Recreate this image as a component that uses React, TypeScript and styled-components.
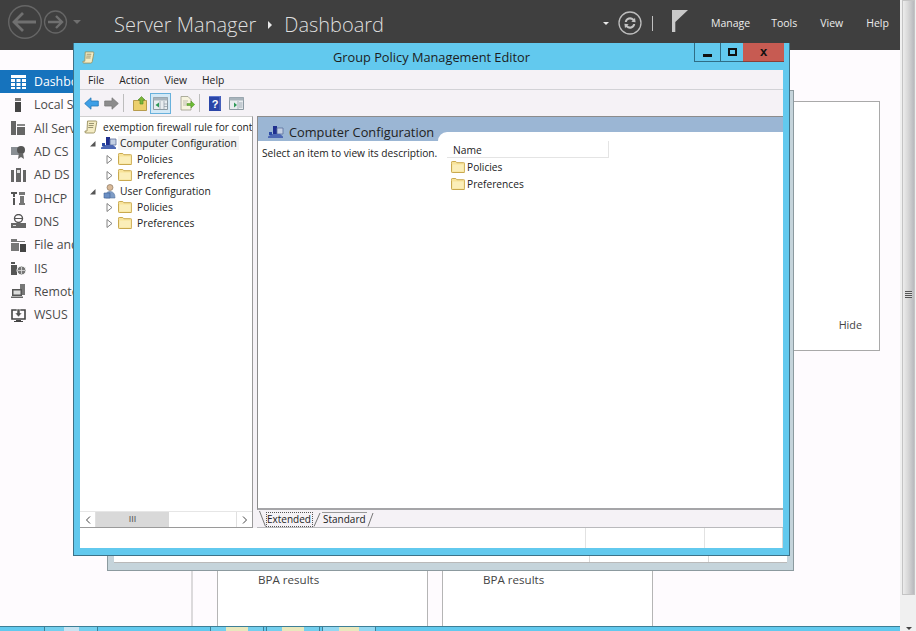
import React from "react";
import styled, { createGlobalStyle } from "styled-components";

const FONT = `"Open Sans", "Noto Sans", "Liberation Sans", sans-serif`;
const SKY = "#62c9ee";

const GlobalStyle = createGlobalStyle`
  html, body { margin: 0; padding: 0; background: #fefbfe; }
  body { font-family: ${FONT}; overflow: hidden; }
  * { box-sizing: border-box; }
`;

// Icons
const FolderIcon: React.FC = () => (
  <svg width="14" height="12" viewBox="0 0 14 12">
    <path d="M.5 2.5V1.2q0-.7.7-.7h3.600l1 1.200h6.900q1 0 1 .8v8.300q0 .7-.7.7H1.200q-.7 0-.7-.7z" fill="#f8e39a" stroke="#c9a94f" />
    <path d="M1.500 3.500h11v7h-11z" fill="#fbeeb9" />
  </svg>
);

const ScrollIcon: React.FC<{ size?: number }> = ({ size = 14 }) => (
  <svg width={size} height={size} viewBox="0 0 14 14">
    <path d="M3.500 1h8.500q1 0 .7 1.500L11 11.500q-.3 1.500-1.600 1.500H2q-1.500 0-1-2h2z" fill="#f4ecc4" stroke="#98905f" strokeWidth=".9" />
    <path d="M5 3.500h5M4.600 5.500h5M4.200 7.500h5" stroke="#8f8a68" strokeWidth=".9" />
  </svg>
);

const ComputerIcon: React.FC = () => (
  <svg width="16" height="14" viewBox="0 0 16 14">
    <path d="M5 1h4v8.500H5z" fill="#1f2f8f" />
    <path d="M9 3h6v6H9z" fill="#c3cfe3" stroke="#5a6f9c" strokeWidth=".8" />
    <path d="M0 11.500 4 9h8l3 2.500v1.500H0z" fill="#4c67b4" />
    <path d="M1 7h3v3H1z" fill="#2a4aa5" />
  </svg>
);

const UserIcon: React.FC = () => (
  <svg width="16" height="15" viewBox="0 0 16 15">
    <circle cx="9" cy="3.500" r="3" fill="#d8b998" stroke="#7d6a56" strokeWidth=".6" />
    <path d="M4.500 14q-.5-6.500 4.500-6.500t5 6.500z" fill="#7e9cc6" stroke="#56739e" strokeWidth=".6" />
    <path d="M3 9h6v5H3z" fill="#6a8fc4" stroke="#3f6296" strokeWidth=".6" />
  </svg>
);

const ToolArrow: React.FC<{ dir: "left" | "right"; color: string; edge: string }> = ({ dir, color, edge }) => (
  <svg width="15" height="13" viewBox="0 0 15 13">
    <path
      d={dir === "left" ? "M.7 6.500 7 .8v3.200h7.300v5H7v3.200z" : "M14.300 6.500 8 .8v3.200H.7v5H8v3.200z"}
      fill={color}
      stroke={edge}
      strokeWidth=".8"
    />
  </svg>
);

const UpFolderIcon: React.FC = () => (
  <svg width="14" height="15" viewBox="0 0 14 15">
    <path d="M.5 4.500h13v10H.5z" fill="#eccf6c" stroke="#a88a32" strokeWidth=".8" />
    <path d="M8.500.5 12 4H10v4H7V4H5z" fill="#7db53a" stroke="#4c8a22" strokeWidth=".6" />
  </svg>
);

const TreeToggleIcon: React.FC = () => (
  <svg width="15" height="13" viewBox="0 0 15 13">
    <path d="M.5.5h14v12H.5z" fill="#e9edf0" stroke="#8c9aa3" />
    <path d="M.5.5h14v3H.5z" fill="#a8b4bc" />
    <path d="M7 4v8M11 4v8M11 7h3M11 9.500h3" stroke="#8c9aa3" strokeWidth=".7" />
    <path d="M6 5.500v5L2.500 8z" fill="#2f9a58" />
  </svg>
);

const ExportIcon: React.FC = () => (
  <svg width="15" height="15" viewBox="0 0 15 15">
    <path d="M1 .5h7l3 3v10.500H1z" fill="#f7f4df" stroke="#9a9a88" strokeWidth=".8" />
    <path d="M3 5h5M3 7h4M3 9h4" stroke="#a8a898" strokeWidth=".7" />
    <path d="M7 7.500h4V5l3.700 3.500L11 12v-2.500H7z" fill="#6cbb35" stroke="#4a8c22" strokeWidth=".5" />
  </svg>
);

const HelpIcon: React.FC = () => (
  <svg width="12" height="15" viewBox="0 0 12 15">
    <path d="M0 0h12v15H0z" fill="#2b46a8" />
    <path d="M10.500 1v13h1V0H0v1z" fill="#5f77cc" />
    <text x="6" y="11.500" textAnchor="middle" fontSize="11" fontWeight="700" fontFamily="Liberation Sans" fill="#fff">?</text>
  </svg>
);

const ActionPaneIcon: React.FC = () => (
  <svg width="15" height="13" viewBox="0 0 15 13">
    <path d="M.5.5h14v12H.5z" fill="#e9edf0" stroke="#8c9aa3" />
    <path d="M.5.5h14v3H.5z" fill="#a8b4bc" />
    <path d="M9 4v8" stroke="#8c9aa3" strokeWidth=".7" />
    <path d="M5 5.500v5L8 8z" fill="#2f9a58" />
    <path d="M10 6h3.500M10 8h3.500M10 10h3.500" stroke="#8c9aa3" strokeWidth=".8" />
  </svg>
);

const sidebarIcons: Record<string, React.ReactNode> = {
  grid: (
    <>
      <path d="M0 0h15v3H0z" fill="#fff" />
      <path d="M0 4h4v3H0zM5.500 4h4v3h-4zM11 4h4v3h-4zM0 8h4v3H0zM5.500 8h4v3h-4zM11 8h4v3h-4zM0 12h4v2H0zM5.500 12h4v2h-4zM11 12h4v2h-4z" fill="#fff" />
    </>
  ),
  local: (
    <>
      <path d="M4 0h6v3H4z" fill="#777" />
      <path d="M4 4h6v10H4z" fill="#444" />
    </>
  ),
  all: (
    <>
      <path d="M0 0h5v14H0z" fill="#666" />
      <path d="M6 3h8v2H6z" fill="#888" />
      <path d="M6 6h8v8H6z" fill="#666" />
    </>
  ),
  cert: (
    <>
      <path d="M0 2h9v8H0z" fill="#8a8f94" />
      <circle cx="10" cy="5" r="4" fill="#555" />
      <path d="M8 8l-1 6 3-2 3 2-1-6z" fill="#666" />
    </>
  ),
  ds: (
    <>
      <path d="M0 2h3v12H0zM5 0h5v14H5zM12 2h3v12h-3z" fill="#666" />
      <path d="M6 2h3v3H6z" fill="#ddd" />
    </>
  ),
  dhcp: (
    <>
      <path d="M0 1h6v2H4v3H2V3H0zM2 7h2v7H2z" fill="#555" />
      <path d="M8 1h6v3H8zM9 5h4v7H9zM8 12h6v2H8z" fill="#777" />
    </>
  ),
  dns: (
    <>
      <circle cx="7.500" cy="4.500" r="4" fill="none" stroke="#555" strokeWidth="1.400" />
      <path d="M3 4.500h9" stroke="#555" />
      <path d="M0 9h15v5H0z" fill="#666" />
      <path d="M2 11h3v1H2z" fill="#ddd" />
    </>
  ),
  file: (
    <>
      <path d="M0 1h6v2h8v1H0zM0 5h8v8H0z" fill="#777" />
      <path d="M9 6h6v8H9z" fill="#444" />
    </>
  ),
  iis: (
    <>
      <path d="M0 1h4v2H0zM0 4h6v10H0z" fill="#555" />
      <circle cx="10.500" cy="9.500" r="4.500" fill="#777" stroke="#fff" />
      <path d="M7 9.500h7M10.500 6v7" stroke="#ddd" strokeWidth=".8" />
    </>
  ),
  remote: (
    <>
      <path d="M9 0h5v11H9z" fill="#777" />
      <path d="M1 5h10v7H1z" fill="#555" />
      <path d="M2.500 6.500h7v4h-7z" fill="#ddd" />
      <path d="M0 12.500h12V14H0z" fill="#666" />
    </>
  ),
  wsus: (
    <>
      <path d="M1 2h13v9H1z" fill="none" stroke="#444" strokeWidth="1.600" />
      <path d="M5 12h5v1h2v1H3v-1h2z" fill="#444" />
      <path d="M6 1h3v4h2L7.500 9 4 5h2z" fill="#555" stroke="#fff" strokeWidth=".5" />
    </>
  ),
};

const Triangle = styled.span<{ $dir: "down" | "right"; $size: number; $color: string }>`
  width: 0;
  height: 0;
  display: inline-block;
  flex: none;
  ${({ $dir, $size, $color }) =>
    $dir === "down"
      ? `border-left: ${$size}px solid transparent; border-right: ${$size}px solid transparent; border-top: ${$size}px solid ${$color};`
      : `border-top: ${$size}px solid transparent; border-bottom: ${$size}px solid transparent; border-left: ${$size}px solid ${$color};`}
`;

const sideItems = [
  { label: "Dashboard", icon: "grid", active: true },
  { label: "Local Server", icon: "local" },
  { label: "All Servers", icon: "all" },
  { label: "AD CS", icon: "cert" },
  { label: "AD DS", icon: "ds" },
  { label: "DHCP", icon: "dhcp" },
  { label: "DNS", icon: "dns" },
  { label: "File and Storage", icon: "file" },
  { label: "IIS", icon: "iis" },
  { label: "Remote Access", icon: "remote" },
  { label: "WSUS", icon: "wsus" },
];

const treeRows = [
  { label: "Computer Configuration", kind: "computer" },
  { label: "Policies", kind: "folder" },
  { label: "Preferences", kind: "folder" },
  { label: "User Configuration", kind: "user" },
  { label: "Policies", kind: "folder" },
  { label: "Preferences", kind: "folder" },
];

const TreeExpander: React.FC<{ open: boolean }> = ({ open }) => (
  <svg width="7" height="9" viewBox="0 0 7 9">
    {open ? (
      <path d="M6.500 2v5.500H1z" fill="#555" />
    ) : (
      <path d="M1 .5v8L6 4.500z" fill="#fff" stroke="#777" strokeWidth=".9" />
    )}
  </svg>
);

const App: React.FC = () => (
  <Root>
    <GlobalStyle />
    <Main>
      <Header>
        <NavGroup>
          <svg width="65" height="34" viewBox="0 0 65 34">
            <circle cx="17" cy="17" r="16.300" fill="none" stroke="#666" strokeWidth="1.400" />
            <path d="M7 17h21M15 8l-9 9 9 9" fill="none" stroke="#707070" strokeWidth="2.800" />
            <circle cx="47.500" cy="17" r="11" fill="none" stroke="#666" strokeWidth="1.300" />
            <path d="M40 17h14M48 11l6 6-6 6" fill="none" stroke="#707070" strokeWidth="2.400" />
          </svg>
          <Triangle $dir="down" $size={4.5} $color="#6f6f6f" />
        </NavGroup>
        <Crumb>Server Manager</Crumb>
        <Triangle $dir="right" $size={4} $color="#e8e8e8" />
        <Crumb>Dashboard</Crumb>
        <HeaderTools>
          <Triangle $dir="down" $size={3} $color="#e8e8e8" />
          <svg width="24" height="24" viewBox="0 0 24 24">
            <circle cx="12" cy="12" r="11" fill="none" stroke="#bdbdbd" strokeWidth="1.300" />
            <path d="M6.800 11a5.300 5.300 0 0 1 9.200-3l1-1.300.6 4.500-4.300-.5 1.300-1.200a3.500 3.500 0 0 0-5.900 1.500zM17.200 13a5.300 5.300 0 0 1-9.200 3l-1 1.300-.6-4.500 4.300.5-1.300 1.200a3.500 3.500 0 0 0 5.900-1.500z" fill="#c4c4c4" />
          </svg>
          <ToolDivider />
          <svg width="16" height="22" viewBox="0 0 16 22">
            <path d="M0 0h16L3.300 12v10H0z" fill="#c9c9c9" />
          </svg>
        </HeaderTools>
        <HeaderMenu>
          <span>Manage</span>
          <span>Tools</span>
          <span>View</span>
          <span>Help</span>
        </HeaderMenu>
      </Header>

      <Body>
        <Sidebar>
          {sideItems.map((item) => (
            <SideItem key={item.label} $active={item.active}>
              <svg width="15" height="14" viewBox="0 0 15 14">
                {sidebarIcons[item.icon]}
              </svg>
              {item.label}
            </SideItem>
          ))}
        </Sidebar>
        <Canvas>
          <RolesCard>
            <HideLink>Hide</HideLink>
          </RolesCard>
          <TileRow>
            <Tile>BPA results</Tile>
            <Tile>BPA results</Tile>
          </TileRow>
        </Canvas>
      </Body>

      <TaskStrip>
        <TaskButton $left={44}>
          <TaskGlow $color="#c9e4f2" $width={15} />
        </TaskButton>
        <TaskButton $left={112}>
          <TaskGlow $color="#e9e8bd" $width={22} />
        </TaskButton>
        <TaskButton $left={2}>
          <TaskGlow $color="#e9e8bd" $width={22} />
        </TaskButton>
        <TaskButton $left={2} $light>
          <TaskGlow $color="#e9e8bd" $width={20} />
        </TaskButton>
      </TaskStrip>
    </Main>

    <Scrollbar>
      <ScrollThumb>
        <ScrollGrip />
      </ScrollThumb>
      <Triangle $dir="down" $size={3} $color="#444" />
    </Scrollbar>

    <BackWindow>
      <BackInner>
        <BackCell />
        <BackCell $width={119} />
        <BackCell $width={79} />
      </BackInner>
    </BackWindow>

    <EditorWindow>
      <TitleBar>
        <ScrollIcon size={13} />
        <WindowTitle>Group Policy Management Editor</WindowTitle>
        <WindowControls>
          <ControlButton>
            <MinGlyph />
          </ControlButton>
          <ControlButton $width={23}>
            <MaxGlyph />
          </ControlButton>
          <CloseButton>x</CloseButton>
        </WindowControls>
      </TitleBar>

      <ClientArea>
        <MenuBar>
          <span>File</span>
          <span>Action</span>
          <span>View</span>
          <span>Help</span>
        </MenuBar>

        <Toolbar>
          <ToolArrow dir="left" color="#3d9fe6" edge="#2378b8" />
          <ToolArrow dir="right" color="#8c8c8c" edge="#7a7a7a" />
          <ToolSep />
          <UpFolderIcon />
          <ActiveTool>
            <TreeToggleIcon />
          </ActiveTool>
          <ExportIcon />
          <ToolSep />
          <HelpIcon />
          <ActionPaneIcon />
        </Toolbar>

        <Panes>
          <TreePane>
            <TreeBody>
              <TreeRoot>
                <ScrollIcon />
                exemption firewall rule for cont
              </TreeRoot>
              {treeRows.map((row, i) => (
                <TreeRow key={i} $child={row.kind === "folder"}>
                  <TreeExpander open={row.kind !== "folder"} />
                  {row.kind === "computer" && <ComputerIcon />}
                  {row.kind === "user" && <UserIcon />}
                  {row.kind === "folder" && <FolderIcon />}
                  <TreeLabel $child={row.kind === "folder"} $selected={row.kind === "computer"}>
                    {row.label}
                  </TreeLabel>
                </TreeRow>
              ))}
            </TreeBody>
            <HScroll>
              <HScrollButton>
                <svg width="6" height="8" viewBox="0 0 6 8">
                  <path d="M5 .5 1.500 4 5 7.500" fill="none" stroke="#444" />
                </svg>
              </HScrollButton>
              <HScrollThumb>III</HScrollThumb>
              <HScrollTrack />
              <HScrollButton>
                <svg width="6" height="8" viewBox="0 0 6 8">
                  <path d="M1 .5 4.500 4 1 7.500" fill="none" stroke="#444" />
                </svg>
              </HScrollButton>
            </HScroll>
          </TreePane>

          <DetailColumn>
            <DetailPane>
              <DetailHeader>
                <ComputerIcon />
                Computer Configuration
                <HeaderNotch />
              </DetailHeader>
              <DetailBody>
                <Description>Select an item to view its description.</Description>
                <ListView>
                  <ListHead>Name</ListHead>
                  <ListRow>
                    <FolderIcon />
                    Policies
                  </ListRow>
                  <ListRow>
                    <FolderIcon />
                    Preferences
                  </ListRow>
                </ListView>
              </DetailBody>
            </DetailPane>
            <TabBar>
              <svg width="8" height="16" viewBox="0 0 8 16">
                <path d="M.5 0l6 15.500" stroke="#777" />
              </svg>
              <ActiveTab>Extended</ActiveTab>
              <svg width="8" height="16" viewBox="0 0 8 16">
                <path d="M1 15.500 7 2" stroke="#777" />
              </svg>
              <PlainTab>Standard</PlainTab>
              <svg width="8" height="16" viewBox="0 0 8 16">
                <path d="M1 15.500 6 2" stroke="#777" />
              </svg>
            </TabBar>
          </DetailColumn>
        </Panes>

        <StatusBar>
          <StatusCell />
          <StatusCell $width={119} />
          <StatusCell $width={78} />
        </StatusBar>
      </ClientArea>
    </EditorWindow>
  </Root>
);

const Root = styled.div`
  position: relative;
  width: 916px;
  height: 631px;
  display: flex;
  overflow: hidden;
  background: #fefbfe;
  color: #222;
`;

const Main = styled.div`
  width: 900px;
  display: flex;
  flex-direction: column;
`;

const Header = styled.header`
  height: 50px;
  flex: none;
  display: flex;
  align-items: center;
  padding-left: 8px;
  background: #3f3f3f;
  color: #e4e4e4;
`;

const NavGroup = styled.div`
  width: 106px;
  margin-top: -6px;
  display: flex;
  align-items: center;
`;

const Crumb = styled.span`
  margin: -2px 9px 0 12px;
  font-size: 20px;
  font-weight: 300;
  color: #dedede;
  white-space: nowrap;
  &:first-of-type {
    margin-left: 0;
  }
  & + span {
    margin-left: 3px;
  }
`;

const HeaderTools = styled.div`
  margin-left: auto;
  margin-top: -4px;
  display: flex;
  align-items: center;
  & > span {
    margin-right: 9px;
  }
  & > svg:last-child {
    margin: -4px 0 0 19px;
  }
`;

const ToolDivider = styled.i`
  width: 1px;
  height: 15px;
  margin-left: 10px;
  background: #c0c0c0;
`;

const HeaderMenu = styled.nav`
  width: 212px;
  margin-top: -5px;
  padding-left: 23px;
  display: flex;
  gap: 21px;
  font-size: 10.500px;
  color: #ececec;
  span:nth-child(3) {
    margin-left: 2px;
  }
  span:nth-child(4) {
    margin-left: 2px;
  }
`;

const Body = styled.div`
  flex: 1;
  min-height: 0;
  display: flex;
`;

const Sidebar = styled.aside`
  width: 193px;
  flex: none;
  padding-top: 20px;
  border-right: 2px solid #dcdadc;
`;

const SideItem = styled.div<{ $active?: boolean }>`
  height: 23.300px;
  display: flex;
  align-items: center;
  gap: 8px;
  padding-left: 11px;
  font-size: 12.300px;
  white-space: nowrap;
  color: ${({ $active }) => ($active ? "#fff" : "#4a4a4a")};
  background: ${({ $active }) => ($active ? "#1673bd" : "transparent")};
`;

const Canvas = styled.main`
  flex: 1;
  min-width: 0;
  display: flex;
  flex-direction: column;
  justify-content: space-between;
  padding-top: 51px;
`;

const RolesCard = styled.section`
  width: 300px;
  height: 250px;
  margin-left: auto;
  margin-right: 20px;
  padding: 0 17px 18px 0;
  display: flex;
  align-items: flex-end;
  justify-content: flex-end;
  background: #fff;
  border: 1px solid #a9a9a9;
`;

const HideLink = styled.span`
  font-size: 10.800px;
  color: #444;
`;

const TileRow = styled.div`
  display: flex;
  gap: 14px;
  padding-left: 24px;
`;

const Tile = styled.div`
  width: 211px;
  height: 57px;
  padding: 3px 0 0 40px;
  font-size: 11.600px;
  color: #444;
  background: #fff;
  border-left: 1px solid #b5b5b5;
  border-right: 1px solid #b5b5b5;
`;

const TaskStrip = styled.footer`
  height: 5px;
  flex: none;
  display: flex;
  background: ${SKY};
  border-top: 1px solid #3d7f97;
  overflow: hidden;
`;

const TaskButton = styled.div<{ $left: number; $light?: boolean }>`
  width: 54px;
  margin-left: ${({ $left }) => $left}px;
  display: flex;
  justify-content: center;
  background: ${({ $light }) => ($light ? "#93d8f2" : "#74cfee")};
  border-left: 1px solid #3d7f97;
  border-right: 1px solid #3d7f97;
`;

const TaskGlow = styled.i<{ $color: string; $width: number }>`
  width: ${({ $width }) => $width}px;
  height: 4px;
  background: ${({ $color }) => $color};
`;

const Scrollbar = styled.div`
  width: 16px;
  padding: 0 1px 0 2px;
  display: flex;
  flex-direction: column;
  align-items: center;
  background: #f0f0f0;
  & > span {
    margin-top: auto;
    margin-bottom: 1px;
  }
`;

const ScrollThumb = styled.div`
  width: 13px;
  height: 595px;
  display: flex;
  align-items: flex-start;
  justify-content: center;
  padding-top: 290px;
  background: linear-gradient(90deg, #ececec 0%, #d8d8d8 45%, #b9b9bd 100%);
  border: 1px solid #c4c4c4;
`;

const ScrollGrip = styled.i`
  width: 7px;
  height: 7px;
  background: repeating-linear-gradient(#555 0 1px, #ddd 1px 2px);
`;

const BackWindow = styled.div`
  position: absolute;
  left: 107px;
  top: 90px;
  width: 687px;
  height: 481px;
  padding: 0 6px 7px;
  background: #c5d4db;
  border: 1px solid #8c9a9f;
`;

const BackInner = styled.div`
  height: 100%;
  display: flex;
  justify-content: flex-end;
  background: #fff;
  border-bottom: 1px solid #b9b9b9;
`;

const BackCell = styled.div<{ $width?: number }>`
  ${({ $width }) => ($width ? `width: ${$width}px;` : "flex: 1;")}
  border-left: 1px solid #d8d8d8;
  &:first-child {
    border-left: 0;
  }
`;

const EditorWindow = styled.div`
  position: absolute;
  left: 73px;
  top: 43px;
  width: 717px;
  height: 513px;
  display: flex;
  flex-direction: column;
  padding: 0 6px 7px;
  background: ${SKY};
  border: 1px solid #3d7288;
  border-top: 0;
`;

const TitleBar = styled.div`
  position: relative;
  height: 27px;
  flex: none;
  display: flex;
  align-items: center;
  justify-content: center;
  & > svg {
    position: absolute;
    left: 2px;
    top: 8px;
  }
`;

const WindowTitle = styled.span`
  font-size: 12.800px;
  color: #1d1d1d;
`;

const WindowControls = styled.div`
  position: absolute;
  top: 0;
  right: -1px;
  height: 19px;
  display: flex;
`;

const ControlButton = styled.div<{ $width?: number }>`
  width: ${({ $width }) => $width ?? 26}px;
  display: flex;
  align-items: center;
  justify-content: center;
  border-left: 1px solid #2f6d85;
  border-bottom: 1px solid #2f6d85;
`;

const MinGlyph = styled.i`
  width: 9px;
  height: 3px;
  margin-top: 6px;
  background: #111;
`;

const MaxGlyph = styled.i`
  width: 9px;
  height: 8px;
  border: 2px solid #111;
`;

const CloseButton = styled.div`
  width: 41px;
  display: flex;
  align-items: center;
  justify-content: center;
  padding-bottom: 2px;
  font-family: "Liberation Sans", sans-serif;
  font-size: 13px;
  font-weight: 700;
  line-height: 1;
  color: #111;
  background: #c75b52;
  border-bottom: 1px solid #8a3f39;
`;

const ClientArea = styled.div`
  flex: 1;
  min-height: 0;
  display: flex;
  flex-direction: column;
  background: #f5f2f6;
`;

const MenuBar = styled.div`
  height: 20px;
  flex: none;
  display: flex;
  align-items: center;
  gap: 15px;
  padding-left: 8px;
  font-size: 10.300px;
  color: #222;
  border-bottom: 1px solid #d2d2d6;
`;

const Toolbar = styled.div`
  height: 26px;
  flex: none;
  display: flex;
  align-items: center;
  gap: 5px;
  padding-left: 4px;
  & > svg:last-child {
    margin-left: 3px;
  }
`;

const ToolSep = styled.i`
  width: 1px;
  height: 18px;
  margin: 0 4px 0 -1px;
  background: #bdbdbd;
`;

const ActiveTool = styled.div`
  width: 21px;
  height: 21px;
  margin: 0 4px 0 -2px;
  display: flex;
  align-items: center;
  justify-content: center;
  background: #d3e9f6;
  border: 1px solid #68b1dc;
`;

const Panes = styled.div`
  flex: 1;
  min-height: 0;
  display: flex;
  gap: 4px;
`;

const TreePane = styled.div`
  width: 173px;
  flex: none;
  display: flex;
  flex-direction: column;
  background: #fff;
  border-right: 1px solid #9a9a9a;
  border-bottom: 1px solid #9a9a9a;
  border-top: 1px solid #cfcfcf;
`;

const TreeBody = styled.div`
  flex: 1;
  min-height: 0;
  padding-top: 1px;
  overflow: hidden;
`;

const TreeRoot = styled.div`
  height: 17px;
  display: flex;
  align-items: center;
  gap: 5px;
  padding-left: 4px;
  font-size: 10.200px;
  white-space: nowrap;
  & > svg {
    flex: none;
  }
`;

const TreeRow = styled.div<{ $child: boolean }>`
  height: 16px;
  display: flex;
  align-items: center;
  gap: 5px;
  padding-left: ${({ $child }) => ($child ? 26 : 9)}px;
  font-size: 10.300px;
  white-space: nowrap;
`;

const TreeLabel = styled.span<{ $child: boolean; $selected: boolean }>`
  margin-left: ${({ $child }) => ($child ? -2 : -4)}px;
  padding: 0 2px;
  background: ${({ $selected }) => ($selected ? "#f3f3f3" : "transparent")};
`;

const HScroll = styled.div`
  height: 16px;
  flex: none;
  display: flex;
  background: #fff;
  border-top: 1px solid #e6e6e6;
`;

const HScrollButton = styled.div`
  width: 16px;
  flex: none;
  display: flex;
  align-items: center;
  justify-content: center;
  border-right: 1px solid #e0e0e0;
  &:last-child {
    border-right: 0;
    border-left: 1px solid #e0e0e0;
  }
`;

const HScrollThumb = styled.div`
  width: 73px;
  flex: none;
  text-align: center;
  font-family: "Liberation Sans", sans-serif;
  font-size: 9px;
  line-height: 15px;
  color: #555;
  background: #d9d9d9;
`;

const HScrollTrack = styled.div`
  flex: 1;
`;

const DetailColumn = styled.div`
  flex: 1;
  min-width: 0;
  display: flex;
  flex-direction: column;
  border-bottom: 1px solid #b9b9bc;
`;

const DetailPane = styled.div`
  flex: 1;
  min-height: 0;
  background: #fff;
  border-top: 1px solid #8c8c8c;
  border-left: 1px solid #8c8c8c;
  border-bottom: 2px solid #a5a5a8;
`;

const DetailHeader = styled.div`
  position: relative;
  height: 24px;
  display: flex;
  align-items: center;
  gap: 5px;
  padding: 6px 0 0 10px;
  font-size: 12.800px;
  color: #222;
  background: #9bb6d4;
`;

const HeaderNotch = styled.i`
  position: absolute;
  left: 180px;
  right: 0;
  top: 15px;
  bottom: 0;
  background: #fff;
  border-top-left-radius: 10px;
`;

const DetailBody = styled.div`
  display: flex;
`;

const Description = styled.div`
  width: 189px;
  flex: none;
  padding: 5px 0 0 4px;
  font-size: 10.200px;
  white-space: nowrap;
`;

const ListView = styled.div`
  flex: 1;
`;

const ListHead = styled.div`
  width: 162px;
  height: 17px;
  padding-left: 6px;
  font-size: 10.300px;
  line-height: 18px;
  border-right: 1px solid #e4e4e4;
  border-bottom: 1px solid #e4e4e4;
`;

const ListRow = styled.div`
  height: 17px;
  display: flex;
  align-items: center;
  gap: 2px;
  padding-left: 4px;
  font-size: 10.200px;
`;

const TabBar = styled.div`
  height: 17px;
  flex: none;
  display: flex;
  align-items: flex-end;
  padding-left: 2px;
  font-size: 10px;
`;

const ActiveTab = styled.span`
  height: 15px;
  padding: 0 1px 0 0;
  line-height: 12px;
  margin-left: -1px;
  border: 1px dotted #555;
`;

const PlainTab = styled.span`
  height: 15px;
  margin-left: 1px;
  padding: 0 1px;
  line-height: 12px;
  border-top: 1px solid #999;
`;

const StatusBar = styled.div`
  height: 20px;
  flex: none;
  display: flex;
  background: #fff;
  border-right: 1px solid #d8d8d8;
`;

const StatusCell = styled.div<{ $width?: number }>`
  ${({ $width }) => ($width ? `width: ${$width}px;` : "flex: 1;")}
  border-left: 1px solid #e2e2e2;
  &:first-child {
    border-left: 0;
  }
`;

export default App;
